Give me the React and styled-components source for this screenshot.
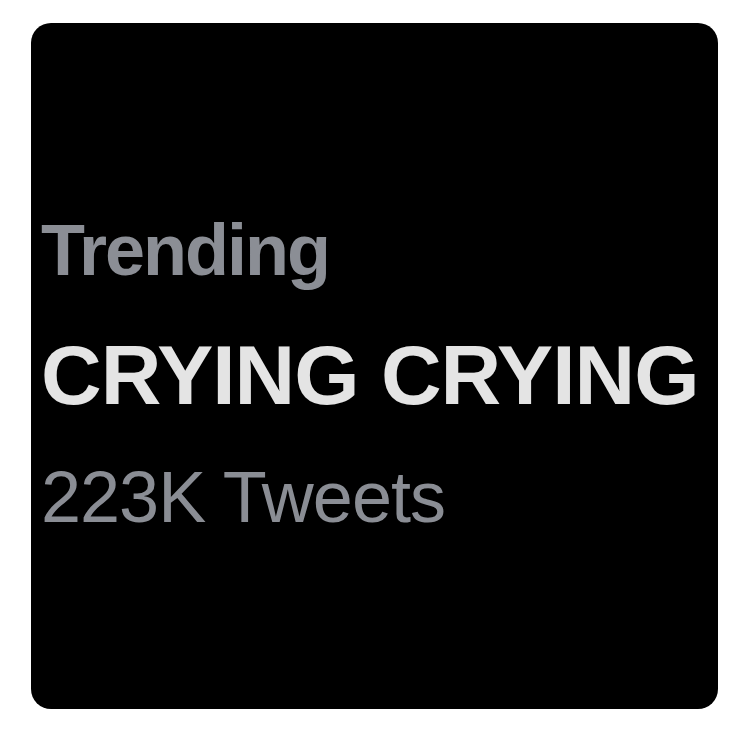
import React from 'react';
import styled, { createGlobalStyle } from 'styled-components';

const GlobalStyle = createGlobalStyle`
  html, body {
    margin: 0;
    padding: 0;
    background: #ffffff;
  }
`;

const Page = styled.div`
  width: 750px;
  height: 734px;
  padding: 23px 0 0 31px;
  box-sizing: border-box;
  background: #ffffff;
`;

const Card = styled.div`
  width: 687px;
  height: 686px;
  box-sizing: border-box;
  padding: 191px 0 0 10px;
  background: #000000;
  border-radius: 20px;
  display: flex;
  flex-direction: column;
  font-family: 'Liberation Sans', Arial, sans-serif;
`;

const Line = styled.div`
  font-size: ${(p) => p.size}px;
  line-height: 1;
  font-weight: ${(p) => (p.bold ? 700 : 400)};
  color: ${(p) => p.color};
  letter-spacing: ${(p) => p.spacing}px;
  margin-top: ${(p) => p.gap || 0}px;
  white-space: nowrap;
`;

const App = () => {
  return (
    <>
      <GlobalStyle />
      <Page>
        <Card>
          <Line size={72} bold color="#8b8e95" spacing={-2}>
            Trending
          </Line>
          <Line size={84} bold color="#e4e4e4" spacing={-1} gap={47}>
            CRYING CRYING
          </Line>
          <Line size={72} color="#8a8d94" spacing={-1} gap={44}>
            223K Tweets
          </Line>
        </Card>
      </Page>
    </>
  );
};

export default App;
